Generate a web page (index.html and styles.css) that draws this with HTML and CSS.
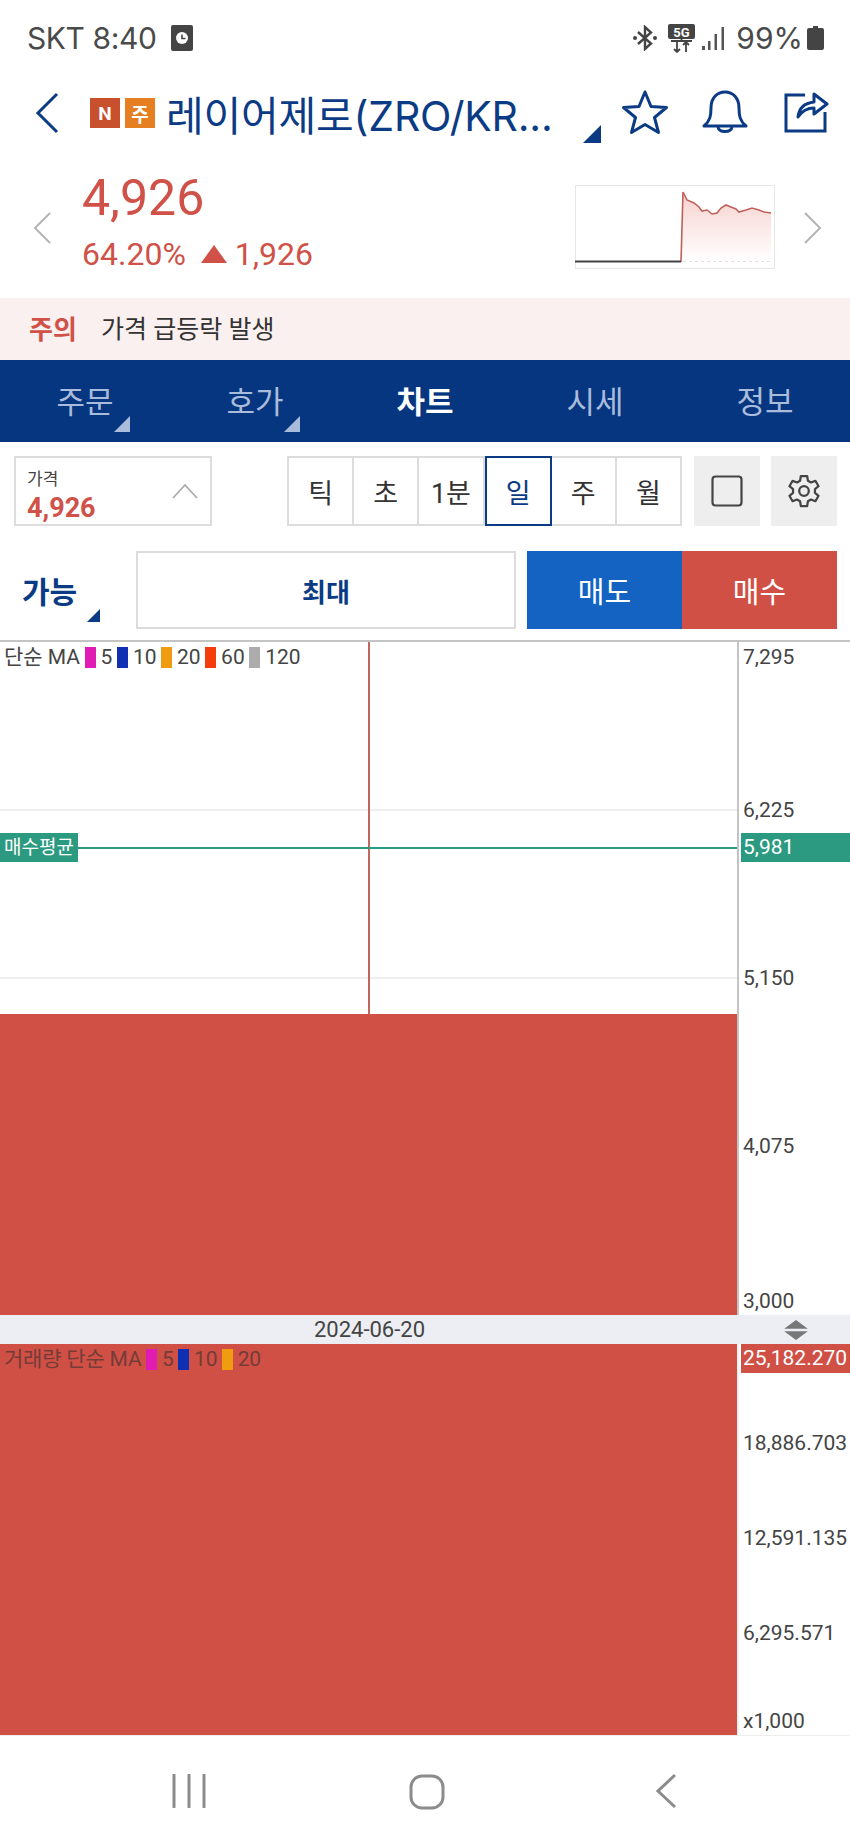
FILE: index.html
```html
<!DOCTYPE html>
<html lang="ko">

<head>
	<title>레이어제로 차트</title>
	<link rel="stylesheet" href="styles.css">
</head>

<body>
	<div class="status-bar">
		<div class="status-left">
			<span class="carrier">SKT 8:40</span>
			<svg class="clock-icon" viewBox="0 0 22 26">
				<rect width="22" height="26" rx="2" fill="#444" />
				<circle cx="11" cy="13" r="6" fill="#fff" />
				<path d="M11 9.500V13.500H14.500" fill="none" stroke="#444" stroke-width="1.600" />
			</svg>
		</div>
		<div class="status-right">
			<svg class="bt-icon" viewBox="0 0 24 26">
				<path d="M5 7L18 18.500L12 24V2L18 7.500L5 19" fill="none" stroke="#444" stroke-width="2.400" />
				<circle cx="2" cy="13" r="2" fill="#444" />
				<circle cx="22" cy="13" r="2" fill="#444" />
			</svg>
			<svg class="fiveg-icon" viewBox="0 0 27 29">
				<rect width="27" height="15" rx="2" fill="#444" />
				<text x="13.500" y="12.500" class="fiveg-text">5G</text>
				<path d="M13.500 15V18M3 17H24M9 18V28M6 25L9 28L12 25M18 28V18M15 21L18 18L21 21" fill="none" stroke="#444" stroke-width="1.800" />
			</svg>
			<svg class="signal-icon" viewBox="0 0 23 24">
				<rect x="0" y="20" width="3" height="4" fill="#555" />
				<rect x="6" y="15" width="2.500" height="9" fill="#555" />
				<rect x="12.500" y="8" width="2.500" height="16" fill="#555" />
				<rect x="19.500" y="1" width="2.500" height="23" fill="#555" />
			</svg>
			<span>99%</span>
			<svg class="battery-icon" viewBox="0 0 17 24">
				<path d="M6 0H11V2H15Q17 2 17 4V22Q17 24 15 24H2Q0 24 0 22V4Q0 2 2 2H6Z" fill="#444" />
			</svg>
		</div>
	</div>

	<div class="title-bar">
		<svg class="back-icon" viewBox="0 0 24 42">
			<path d="M22 2L3 21L22 40" fill="none" stroke="#0b3b84" stroke-width="3" />
		</svg>
		<span class="badge badge-n">N</span>
		<span class="badge badge-stock">주</span>
		<h1 class="title">레이어제로(ZRO/KR...</h1>
		<span class="corner corner-title"></span>
		<svg class="star-icon" viewBox="0 0 48 46">
			<path d="M24 3L30 17.500L45.500 18.500L33.500 28.500L37.500 43.500L24 35.500L10.500 43.500L14.500 28.500L2.500 18.500L18 17.500Z" fill="none" stroke="#0b3b84" stroke-width="3" stroke-linejoin="round" />
		</svg>
		<svg class="bell-icon" viewBox="0 0 46 44">
			<path d="M2 36C8 31 9 26 9 18C9 8 15 2 23 2C31 2 37 8 37 18C37 26 38 31 44 36Z" fill="none" stroke="#0b3b84" stroke-width="3" stroke-linejoin="round" />
			<path d="M16 37C17 43 29 43 30 37" fill="none" stroke="#0b3b84" stroke-width="3" />
		</svg>
		<svg class="share-icon" viewBox="0 0 45 44">
			<path d="M21 5H2V41H41V22" fill="none" stroke="#0b3b84" stroke-width="3" />
			<path d="M14 27C15 18 21 13 30 12V4L43 14L30 24V18C23 18 18 21 14 27Z" fill="none" stroke="#0b3b84" stroke-width="3" stroke-linejoin="round" />
		</svg>
	</div>

	<div class="price-row">
		<svg class="side-arrow" viewBox="0 0 18 32">
			<path d="M17 1L2 16L17 31" fill="none" stroke="#b4b4b4" stroke-width="2" />
		</svg>
		<div class="price-info">
			<div class="price">4,926</div>
			<div class="price-sub">
				<span>64.20%</span>
				<span class="up-mark"></span>
				<span>1,926</span>
			</div>
		</div>
		<svg class="spark" viewBox="0 0 200 84">
			<defs>
				<linearGradient id="sparkFill" x1="0" y1="0" x2="0" y2="1">
					<stop offset="0" stop-color="#f6d2ce" />
					<stop offset="1" stop-color="#ffffff" />
				</linearGradient>
			</defs>
			<rect x="0.500" y="0.500" width="199" height="83" fill="#fff" stroke="#e6e6e6" />
			<path d="M106 77L108 7L112 15L119 18L124 22L127 26L132 25L137 29L142 28L146 23L151 20L156 22L161 24L164 27L171 25L177 23L184 25L189 27L196 28V77Z" fill="url(#sparkFill)" />
			<path d="M106 77L108 7L112 15L119 18L124 22L127 26L132 25L137 29L142 28L146 23L151 20L156 22L161 24L164 27L171 25L177 23L184 25L189 27L196 28" fill="none" stroke="#c0605a" stroke-width="1.600" />
			<path d="M108 76.500H198" fill="none" stroke="#e2e2e2" stroke-dasharray="3 3" />
			<path d="M0 76.500H106" fill="none" stroke="#444" stroke-width="1.800" />
		</svg>
		<svg class="side-arrow side-arrow-next" viewBox="0 0 18 32">
			<path d="M1 1L16 16L1 31" fill="none" stroke="#b4b4b4" stroke-width="2" />
		</svg>
	</div>

	<div class="alert">
		<strong>주의</strong>
		<span>가격 급등락 발생</span>
	</div>

	<div class="tabs">
		<div class="tab">주문<span class="corner corner-tab"></span></div>
		<div class="tab">호가<span class="corner corner-tab"></span></div>
		<div class="tab tab-active">차트</div>
		<div class="tab">시세</div>
		<div class="tab">정보</div>
	</div>

	<div class="tools">
		<div class="price-select">
			<div class="select-text">
				<div class="select-label">가격</div>
				<div class="select-value">4,926</div>
			</div>
			<svg class="select-arrow" viewBox="0 0 26 16">
				<path d="M1 15L13 2L25 15" fill="none" stroke="#aaa" stroke-width="1.800" />
			</svg>
		</div>
		<div class="periods">
			<div class="period">틱</div>
			<div class="period">초</div>
			<div class="period">1분</div>
			<div class="period period-on">일</div>
			<div class="period">주</div>
			<div class="period">월</div>
		</div>
		<div class="tool-btn tool-first">
			<svg class="square-icon" viewBox="0 0 32 32">
				<rect x="1.500" y="1.500" width="29" height="29" rx="3" fill="none" stroke="#444" stroke-width="2.200" />
			</svg>
		</div>
		<div class="tool-btn">
			<svg class="gear-icon" viewBox="0 0 24 24">
				<path d="M9.900 2H14.100L14.600 5.100L16.700 6.300L19.600 5.200L21.700 8.800L19.300 10.800V13.200L21.700 15.200L19.600 18.800L16.700 17.700L14.600 18.900L14.100 22H9.900L9.400 18.900L7.300 17.700L4.400 18.800L2.300 15.200L4.700 13.200V10.800L2.300 8.800L4.400 5.200L7.300 6.300L9.400 5.100Z" fill="none" stroke="#444" stroke-width="1.500" stroke-linejoin="round" />
				<circle cx="12" cy="12" r="3.200" fill="none" stroke="#444" stroke-width="1.500" />
			</svg>
		</div>
	</div>

	<div class="order-row">
		<div class="able">가능<span class="corner corner-able"></span></div>
		<div class="max-btn">최대</div>
		<div class="trade-btns">
			<div class="trade trade-sell">매도</div>
			<div class="trade trade-buy">매수</div>
		</div>
	</div>

	<div class="chart">
		<div class="main-chart">
			<div class="plot">
				<div class="grid-line grid-a"></div>
				<div class="grid-line grid-b"></div>
				<div class="cross"></div>
				<div class="avg-line"></div>
				<div class="avg-tag">매수평균</div>
				<div class="legend">
					<span>단순 MA</span>
					<i class="swatch pink"></i><span>5</span>
					<i class="swatch blue"></i><span>10</span>
					<i class="swatch orange"></i><span>20</span>
					<i class="swatch red"></i><span>60</span>
					<i class="swatch gray"></i><span>120</span>
				</div>
				<div class="candle"></div>
			</div>
			<div class="axis">
				<span class="tick tick-1">7,295</span>
				<span class="tick tick-2">6,225</span>
				<span class="tick-tag tag-green">5,981</span>
				<span class="tick tick-3">5,150</span>
				<span class="tick tick-4">4,075</span>
				<span class="tick tick-5">3,000</span>
			</div>
		</div>

		<div class="date-bar">
			<div class="date">2024-06-20</div>
			<div class="date-side">
				<svg class="resize-icon" viewBox="0 0 26 22">
					<path d="M13 0L26 9.500H0Z" fill="#777" />
					<path d="M13 22L26 12.500H0Z" fill="#777" />
				</svg>
			</div>
		</div>

		<div class="volume-chart">
			<div class="vol-plot">
				<div class="legend legend-vol">
					<span>거래량 단순 MA</span>
					<i class="swatch pink"></i><span>5</span>
					<i class="swatch blue"></i><span>10</span>
					<i class="swatch orange"></i><span>20</span>
				</div>
			</div>
			<div class="axis">
				<span class="tick-tag tag-red">25,182.270</span>
				<span class="tick vol-1">18,886.703</span>
				<span class="tick vol-2">12,591.135</span>
				<span class="tick vol-3">6,295.571</span>
				<span class="tick vol-4">x1,000</span>
			</div>
		</div>
	</div>

	<div class="nav-bar">
		<svg class="recent-icon" viewBox="0 0 34 34">
			<path d="M2 1V33M17 1V33M32 1V33" fill="none" stroke="#8c8c8c" stroke-width="3" stroke-linecap="round" />
		</svg>
		<svg class="home-icon" viewBox="0 0 36 36">
			<rect x="2" y="2" width="32" height="32" rx="11" fill="none" stroke="#8c8c8c" stroke-width="3" />
		</svg>
		<svg class="sys-back-icon" viewBox="0 0 22 36">
			<path d="M20 2L3 18L20 34" fill="none" stroke="#8c8c8c" stroke-width="3" />
		</svg>
	</div>
</body>

</html>
```

FILE: styles.css
```css
* {
	box-sizing: border-box;
}

body {
	margin: 0;
	width: 850px;
	height: 1842px;
	overflow: hidden;
	background-color: #fff;
	color: #444;
	font-family: Roboto, "Noto Sans CJK KR", sans-serif;
}

svg {
	display: block;
	flex: none;
}

/* status bar */
.status-bar {
	height: 66px;
	padding: 10px 26px 0 27px;
	display: flex;
	justify-content: space-between;
	align-items: center;
	font-family: Inter, sans-serif;
	font-size: 30px;
	color: #4a4a4a;
}

.status-left,
.status-right {
	display: flex;
	align-items: center;
}

.carrier {
	letter-spacing: -0.4px;
}

.clock-icon {
	width: 22px;
	height: 26px;
	margin-left: 14px;
}

.bt-icon {
	width: 24px;
	height: 26px;
}

.fiveg-icon {
	width: 27px;
	height: 29px;
	margin-left: 11px;
}

.fiveg-text {
	font-family: Roboto, sans-serif;
	font-size: 13px;
	font-weight: 700;
	fill: #fff;
	text-anchor: middle;
}

.signal-icon {
	width: 23px;
	height: 24px;
	margin-left: 7px;
}

.status-right span {
	margin-left: 11px;
}

.battery-icon {
	width: 17px;
	height: 24px;
	margin-left: 4px;
}

/* title */
.title-bar {
	height: 84px;
	padding: 10px 0 0 35px;
	display: flex;
	align-items: center;
	position: relative;
}

.back-icon {
	width: 24px;
	height: 42px;
}

.badge {
	width: 30px;
	height: 30px;
	color: #fff;
	font-size: 19px;
	font-weight: 700;
	display: flex;
	justify-content: center;
	align-items: center;
}

.badge-n {
	margin-left: 31px;
	background-color: #c9502c;
}

.badge-stock {
	margin-left: 5px;
	background-color: #e67e22;
}

.title {
	margin: 0 0 0 11px;
	width: 416px;
	font-size: 41px;
	font-weight: 400;
	color: #0b3b84;
	white-space: nowrap;
	font-family: Inter, "Noto Sans CJK KR", sans-serif;
	letter-spacing: -0.2px;
}

.corner {
	width: 0;
	height: 0;
	border-style: solid;
	border-color: transparent;
}

.corner-title {
	border-width: 0 0 18px 18px;
	border-bottom-color: #0b3b84;
	position: absolute;
	left: 583px;
	top: 59px;
}

.star-icon {
	width: 48px;
	height: 46px;
	position: absolute;
	left: 621px;
	top: 23px;
}

.bell-icon {
	width: 46px;
	height: 44px;
	position: absolute;
	left: 702px;
	top: 24px;
}

.share-icon {
	width: 45px;
	height: 44px;
	position: absolute;
	left: 784px;
	top: 24px;
}

/* price */
.price-row {
	height: 148px;
	padding: 0 28px 0 33px;
	display: flex;
	align-items: center;
}

.side-arrow {
	width: 18px;
	height: 32px;
	margin-top: 8px;
}

.price-info {
	margin-left: 31px;
	width: 495px;
	margin-top: -9px;
}

.price {
	font-size: 50px;
	line-height: 60px;
	color: #cf5148;
}

.price-sub {
	display: flex;
	align-items: center;
	margin-top: 8px;
	font-size: 32px;
	line-height: 36px;
	color: #cf5148;
}

.up-mark {
	width: 0;
	height: 0;
	margin: 0 8px 0 15px;
	border-style: solid;
	border-width: 0 13px 18px 13px;
	border-color: transparent transparent #cf5148;
}

.spark {
	width: 200px;
	height: 84px;
	margin-top: 5px;
	margin-right: 29px;
}

/* alert */
.alert {
	height: 62px;
	padding: 0 0 4px 29px;
	display: flex;
	align-items: center;
	background-color: #faf0ef;
	font-size: 25px;
	color: #333;
}

.alert strong {
	width: 72px;
	font-size: 26px;
	color: #cf5148;
}

/* tabs */
.tabs {
	height: 82px;
	display: flex;
	background-color: #06367f;
}

.tab {
	width: 170px;
	padding-bottom: 4px;
	display: flex;
	justify-content: center;
	align-items: center;
	position: relative;
	font-size: 31px;
	color: #a9bcdc;
}

.tab-active {
	color: #fff;
	font-weight: 700;
}

.corner-tab {
	border-width: 0 0 16px 16px;
	border-bottom-color: #a9bcdc;
	position: absolute;
	left: 114px;
	top: 56px;
}

/* toolbar */
.tools {
	margin-top: 14px;
	height: 70px;
	padding-left: 14px;
	display: flex;
}

.price-select {
	width: 198px;
	padding: 0 12px 0 11px;
	border: 2px solid #dcdcdc;
	display: flex;
	justify-content: space-between;
	align-items: center;
}

.select-text {
	padding-top: 8px;
}

.select-label {
	font-size: 17px;
	line-height: 26px;
	color: #444;
}

.select-value {
	font-size: 27px;
	line-height: 32px;
	font-weight: 700;
	color: #cf5148;
}

.select-arrow {
	width: 26px;
	height: 16px;
}

.periods {
	margin-left: 75px;
	width: 395px;
	display: flex;
	border: 2px solid #dcdcdc;
}

.period {
	flex: 1;
	display: flex;
	justify-content: center;
	align-items: center;
	font-size: 27px;
	color: #333;
	border-right: 2px solid #dcdcdc;
}

.period:last-child {
	border-right: none;
}

.period-on {
	margin: -2px 0;
	border: 2px solid #0b3b84;
	color: #0b3b84;
}

.tool-btn {
	width: 66px;
	margin-left: 11px;
	background-color: #eeeeee;
	display: flex;
	justify-content: center;
	align-items: center;
}

.tool-first {
	margin-left: 12px;
}

.square-icon {
	width: 32px;
	height: 32px;
}

.gear-icon {
	width: 36px;
	height: 36px;
}

/* order row */
.order-row {
	margin-top: 25px;
	height: 78px;
	padding-left: 22px;
	display: flex;
}

.able {
	width: 114px;
	display: flex;
	align-items: center;
	position: relative;
	font-size: 30px;
	font-weight: 700;
	color: #0b3b84;
}

.corner-able {
	border-width: 0 0 13px 13px;
	border-bottom-color: #0b3b84;
	position: absolute;
	left: 65px;
	top: 58px;
}

.max-btn {
	width: 380px;
	border: 2px solid #dcdcdc;
	display: flex;
	justify-content: center;
	align-items: center;
	font-size: 26px;
	font-weight: 700;
	color: #0b3b84;
}

.trade-btns {
	margin-left: 11px;
	display: flex;
}

.trade {
	width: 155px;
	display: flex;
	justify-content: center;
	align-items: center;
	font-size: 29px;
	color: #fff;
}

.trade-sell {
	background-color: #1463c2;
}

.trade-buy {
	background-color: #d05046;
}

/* chart */
.chart {
	margin-top: 11px;
	border-top: 2px solid #c4c4c4;
}

.main-chart {
	height: 673px;
	display: flex;
}

.plot {
	width: 739px;
	border-right: 2px solid #c4c4c4;
	display: flex;
	flex-direction: column;
	justify-content: flex-end;
	position: relative;
}

.candle {
	height: 301px;
	background-color: #d05046;
}

.grid-line {
	position: absolute;
	left: 0;
	right: 0;
	height: 2px;
	background-color: #efefef;
}

.grid-a {
	top: 167px;
}

.grid-b {
	top: 335px;
}

.cross {
	position: absolute;
	left: 368px;
	top: 0;
	width: 2px;
	height: 372px;
	background-color: #c0665c;
}

.avg-line {
	position: absolute;
	left: 0;
	right: 0;
	top: 205px;
	height: 2px;
	background-color: #2c9a80;
}

.avg-tag {
	position: absolute;
	left: 0;
	top: 191px;
	width: 78px;
	height: 29px;
	background-color: #2c9a80;
	color: #fff;
	font-size: 19px;
	line-height: 29px;
	text-align: center;
}

.legend {
	position: absolute;
	left: 4px;
	top: 2px;
	display: flex;
	align-items: center;
	font-size: 21px;
	line-height: 26px;
	color: #444;
}

.legend .swatch {
	width: 11px;
	height: 21px;
	margin: 0 5px 0 4.500px;
}

.pink {
	background-color: #e01cb4;
}

.blue {
	background-color: #1030b4;
}

.orange {
	background-color: #f09c10;
}

.red {
	background-color: #f43c0c;
}

.gray {
	background-color: #acacac;
}

.axis {
	flex: 1;
	position: relative;
	font-size: 21px;
}

.tick {
	position: absolute;
	left: 4px;
	line-height: 26px;
}

.tick-1 {
	top: 2px;
}

.tick-2 {
	top: 155px;
}

.tick-3 {
	top: 323px;
}

.tick-4 {
	top: 491px;
}

.tick-5 {
	top: 646px;
}

.tick-tag {
	position: absolute;
	left: 2px;
	right: 0;
	height: 29px;
	padding-left: 2px;
	line-height: 29px;
	color: #fff;
}

.tag-green {
	top: 191px;
	background-color: #2c9a80;
}

.tag-red {
	top: 0;
	background-color: #d05046;
}

.date-bar {
	height: 29px;
	display: flex;
	background-color: #eceef3;
	font-size: 22px;
}

.date {
	width: 739px;
	line-height: 29px;
	text-align: center;
}

.date-side {
	flex: 1;
	display: flex;
	justify-content: center;
	align-items: center;
}

.resize-icon {
	width: 26px;
	height: 20px;
	margin-left: 2px;
}

.volume-chart {
	height: 392px;
	display: flex;
	border-bottom: 1px solid #eee;
}

.vol-plot {
	width: 739px;
	background-color: #d05046;
	border-right: 2px solid #f4f0ef;
	position: relative;
}

.legend-vol {
	letter-spacing: -0.2px;
	color: #743c37;
}

.vol-1 {
	top: 86px;
}

.vol-2 {
	top: 181px;
}

.vol-3 {
	top: 276px;
}

.vol-4 {
	top: 364px;
}

/* system nav */
.nav-bar {
	position: relative;
	height: 106px;
}

.recent-icon {
	position: absolute;
	left: 172px;
	top: 38px;
	width: 34px;
	height: 34px;
}

.home-icon {
	position: absolute;
	left: 409px;
	top: 38px;
	width: 36px;
	height: 36px;
}

.sys-back-icon {
	position: absolute;
	left: 655px;
	top: 37px;
	width: 22px;
	height: 36px;
}
```
